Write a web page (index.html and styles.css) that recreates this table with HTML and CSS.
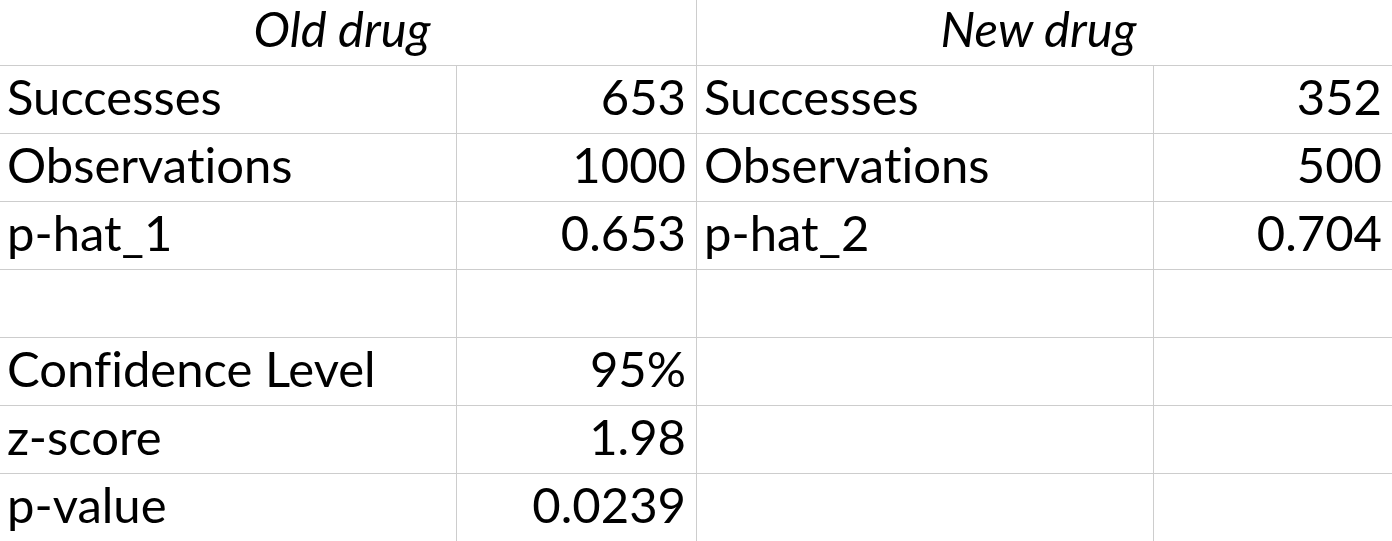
FILE: index.html
```html
<!DOCTYPE html>
<html>
<head>
<meta charset="utf-8">
<link rel="stylesheet" href="styles.css">
</head>
<body>
<div class="sheet">
  <div class="cell head span2">Old drug</div>
  <div class="cell head span2 last">New drug</div>

  <div class="cell">Successes</div>
  <div class="cell num">653</div>
  <div class="cell">Successes</div>
  <div class="cell num last">352</div>

  <div class="cell">Observations</div>
  <div class="cell num">1000</div>
  <div class="cell">Observations</div>
  <div class="cell num last">500</div>

  <div class="cell">p-hat_1</div>
  <div class="cell num">0.653</div>
  <div class="cell">p-hat_2</div>
  <div class="cell num last">0.704</div>

  <div class="cell"></div>
  <div class="cell num"></div>
  <div class="cell"></div>
  <div class="cell num last"></div>

  <div class="cell">Confidence Level</div>
  <div class="cell num">95%</div>
  <div class="cell"></div>
  <div class="cell num last"></div>

  <div class="cell">z-score</div>
  <div class="cell num">1.98</div>
  <div class="cell"></div>
  <div class="cell num last"></div>

  <div class="cell">p-value</div>
  <div class="cell num">0.0239</div>
  <div class="cell"></div>
  <div class="cell num last"></div>
</div>
</body>
</html>
```
FILE: styles.css
```css
html, body {
  margin: 0;
  padding: 0;
  background: #ffffff;
  overflow: hidden;
}
.sheet {
  display: grid;
  grid-template-columns: 457px 240px 457px 238px;
  grid-template-rows: 66px repeat(7, 68px);
  font-family: "Lato", "Open Sans", sans-serif;
  font-size: 49px;
  font-variant-ligatures: none;
  color: #000;
}
.cell {
  box-sizing: border-box;
  border-right: 1px solid #cdcdcd;
  border-bottom: 1px solid #cdcdcd;
  display: flex;
  align-items: flex-end;
  padding: 0 10px 7px 7px;
  line-height: 60px;
  white-space: nowrap;
  overflow: hidden;
}
.cell.num {
  justify-content: flex-end;
}
.cell.last {
  border-right: none;
}
.head {
  font-style: italic;
  justify-content: center;
  padding: 0 12px 7px 0;
}
.span2 {
  grid-column: span 2;
}
```
